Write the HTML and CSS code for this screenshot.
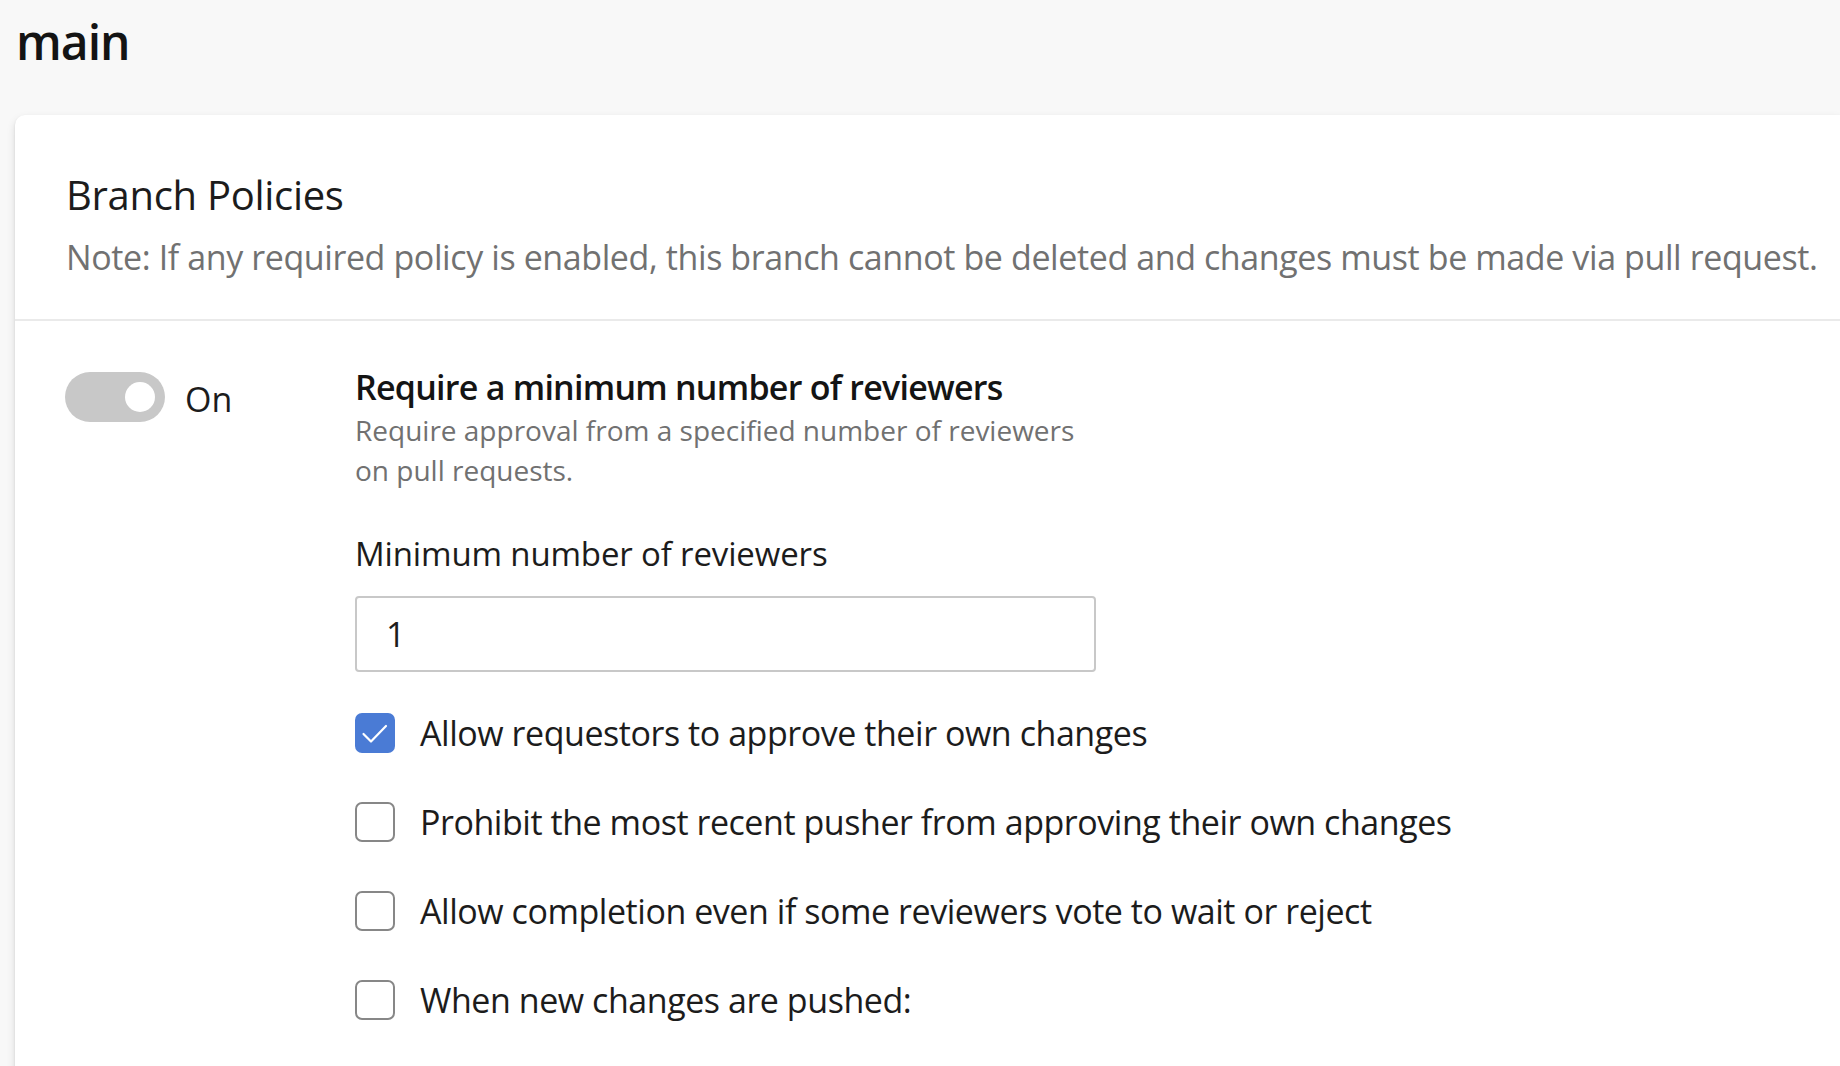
FILE: index.html
```html
<!DOCTYPE html>
<html lang="en">
<head>
<meta charset="utf-8">
<title>main - Branch Policies</title>
<link rel="stylesheet" href="styles.css">
</head>
<body>
<h1 class="branch-name">main</h1>
<section class="card">
  <header class="card-header">
    <h2 class="card-title">Branch Policies</h2>
    <p class="card-note">Note: If any required policy is enabled, this branch cannot be deleted and changes must be made via pull request.</p>
  </header>
  <div class="policy">
    <div class="policy-toggle">
      <span class="toggle"><span class="toggle-knob"></span></span>
      <span class="toggle-label">On</span>
    </div>
    <div class="policy-body">
      <div class="policy-title">Require a minimum number of reviewers</div>
      <div class="policy-desc">Require approval from a specified number of reviewers<br>on pull requests.</div>
      <label class="field-label" for="minrev">Minimum number of reviewers</label>
      <input class="text-input" id="minrev" type="text" value="1">
      <ul class="options">
        <li class="option">
          <span class="checkbox checked">
            <svg viewBox="0 0 40 40" width="40" height="40"><path d="M8.5 21 L16 28.5 L31 13" fill="none" stroke="#fff" stroke-width="2.2" stroke-linecap="round" stroke-linejoin="round"/></svg>
          </span>
          <span class="option-label">Allow requestors to approve their own changes</span>
        </li>
        <li class="option">
          <span class="checkbox"></span>
          <span class="option-label">Prohibit the most recent pusher from approving their own changes</span>
        </li>
        <li class="option">
          <span class="checkbox"></span>
          <span class="option-label">Allow completion even if some reviewers vote to wait or reject</span>
        </li>
        <li class="option">
          <span class="checkbox"></span>
          <span class="option-label">When new changes are pushed:</span>
        </li>
      </ul>
    </div>
  </div>
</section>
</body>
</html>
```

FILE: styles.css
```css
html, body {
  margin: 0;
  padding: 0;
  height: 100%;
  overflow: hidden;
}
body {
  background: #f8f8f8;
  font-family: "Open Sans", "Noto Sans", sans-serif;
  color: #1c1c1c;
}
.branch-name {
  margin: 0;
  padding: 16px 16px 0;
  font-size: 48px;
  line-height: 52px;
  font-weight: 600;
  letter-spacing: -1px;
  color: #141414;
}
.card {
  margin: 47px 0 0 15px;
  background: #fff;
  border-radius: 10px 0 0 0;
  box-shadow: 0 4px 9px rgba(0, 0, 0, 0.13), 0 1px 2px rgba(0, 0, 0, 0.1);
  min-height: 1000px;
}
.card-header {
  padding: 52px 0 40px 51px;
  border-bottom: 2px solid #eaeaea;
}
.card-title {
  margin: 0;
  font-size: 40px;
  line-height: 56px;
  font-weight: 400;
  letter-spacing: -0.3px;
  color: #1c1c1c;
}
.card-note {
  margin: 12px 0 0;
  font-size: 34px;
  line-height: 44px;
  letter-spacing: -0.4px;
  white-space: nowrap;
  color: #717171;
}
.policy {
  display: grid;
  grid-template-columns: 290px 1fr;
  padding: 46px 0 0 50px;
}
.policy-toggle {
  display: flex;
  align-items: center;
  gap: 20px;
  margin-top: 5px;
  height: 50px;
}
.toggle {
  display: flex;
  align-items: center;
  justify-content: flex-end;
  width: 100px;
  height: 50px;
  padding: 0 10px;
  box-sizing: border-box;
  border-radius: 25px;
  background: #c8c8c8;
}
.toggle-knob {
  width: 30px;
  height: 30px;
  border-radius: 50%;
  background: #fff;
}
.toggle-label {
  font-size: 34px;
  line-height: 50px;
  padding-top: 3px;
  color: #1c1c1c;
}
.policy-body {
  display: flex;
  flex-direction: column;
  align-items: flex-start;
}
.policy-title {
  font-size: 34px;
  line-height: 40px;
  font-weight: 600;
  letter-spacing: -0.75px;
  color: #141414;
}
.policy-desc {
  margin-top: 3px;
  font-size: 28px;
  line-height: 40px;
  color: #717171;
}
.field-label {
  margin-top: 42px;
  font-size: 33px;
  line-height: 44px;
  letter-spacing: -0.15px;
  color: #1c1c1c;
}
.text-input {
  margin: 20px 0 0;
  width: 741px;
  height: 76px;
  box-sizing: border-box;
  border: 2px solid #c8c8c8;
  border-radius: 4px;
  padding: 0 0 0 29px;
  font-family: inherit;
  font-size: 34px;
  color: #1c1c1c;
  background: #fff;
  outline: none;
}
.options {
  list-style: none;
  margin: 41px 0 0;
  padding: 0;
  display: flex;
  flex-direction: column;
  gap: 49px;
}
.option {
  display: flex;
  align-items: center;
  gap: 25px;
  height: 40px;
}
.checkbox {
  flex: none;
  width: 40px;
  height: 40px;
  box-sizing: border-box;
  border: 2px solid #878787;
  border-radius: 7px;
  display: flex;
  align-items: center;
  justify-content: center;
}
.checkbox.checked {
  border: none;
  background: #4a7bd5;
}
.checkbox svg {
  display: block;
}
.option-label {
  font-size: 34px;
  line-height: 40px;
  letter-spacing: -0.45px;
  color: #1c1c1c;
}
```
